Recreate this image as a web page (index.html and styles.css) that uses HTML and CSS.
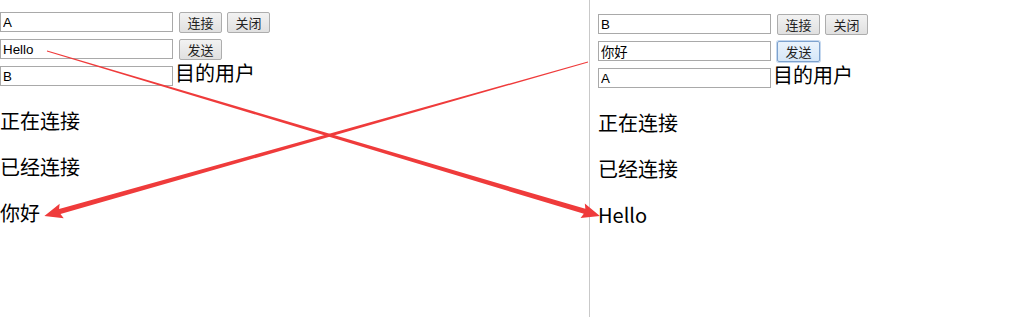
FILE: index.html
```html
<!DOCTYPE html>
<html lang="zh-CN">
<head>
    <meta charset="UTF-8">
    <title>WebSocket 聊天测试</title>
    <link rel="stylesheet" href="styles.css">
</head>
<body>

<div class="screens">
    <!-- 用户 A 的窗口 -->
    <div class="pane pane-left">
        <div class="row">
            <input class="field" type="text" value="A">
            <button class="btn">连接</button>
            <button class="btn">关闭</button>
        </div>
        <div class="row">
            <input class="field" type="text" value="Hello">
            <button class="btn">发送</button>
        </div>
        <div class="row row-target">
            <input class="field" type="text" value="B">
            <span class="label">目的用户</span>
        </div>
        <p class="msg">正在连接</p>
        <p class="msg">已经连接</p>
        <p class="msg">你好</p>
    </div>

    <!-- 用户 B 的窗口 -->
    <div class="pane pane-right">
        <div class="row">
            <input class="field" type="text" value="B">
            <button class="btn">连接</button>
            <button class="btn">关闭</button>
        </div>
        <div class="row">
            <input class="field" type="text" value="你好">
            <button class="btn focused">发送</button>
        </div>
        <div class="row row-target">
            <input class="field" type="text" value="A">
            <span class="label">目的用户</span>
        </div>
        <p class="msg">正在连接</p>
        <p class="msg">已经连接</p>
        <p class="msg">Hello</p>
    </div>
</div>

<!-- 红色箭头：消息的流向 -->
<svg class="arrows" width="1030" height="317" viewBox="0 0 1030 317">
    <g transform="translate(47 51) rotate(16.61)">
        <polygon points="0,-0.4 561,-2.6 559,-7.5 577,0 559,7.5 561,2.6 0,0.4"/>
    </g>
    <g transform="translate(588 62) rotate(164.19)">
        <polygon points="0,-0.4 549,-2.6 547,-7.5 565,0 547,7.5 549,2.6 0,0.4"/>
    </g>
</svg>

</body>
</html>
```

FILE: styles.css
```css
/* Algemene pagina */
body {
    margin: 0;
    background-color: white;
    font-family: "Noto Sans CJK SC", "Noto Sans", sans-serif;
    color: black;
    overflow: hidden;
}

.screens {
    display: flex;
    height: 317px;
}

/* Twee browservensters naast elkaar */
.pane {
    box-sizing: border-box;
}

.pane-left {
    width: 590px;
    padding-top: 12px;
    border-right: 1px solid #c9c9c9;
}

.pane-right {
    flex: 1;
    padding: 14px 0 0 8px;
}

/* Rijen met invoervelden */
.row {
    display: flex;
    align-items: center;
    height: 20px;
    margin-bottom: 7px;
}

.field {
    box-sizing: border-box;
    width: 173px;
    height: 20px;
    margin: 0;
    padding: 1px 2px;
    border: 1px solid #a9a9a9;
    font-family: "Liberation Sans", "Noto Sans CJK SC", sans-serif;
    font-size: 13.33px;
    color: black;
    background-color: white;
}

.btn {
    box-sizing: border-box;
    width: 43px;
    height: 21px;
    margin: 0 0 0 5px;
    padding: 0;
    border: 1px solid #adadad;
    border-radius: 2px;
    background: linear-gradient(#f2f2f2, #e0e0e0);
    font-family: "Noto Sans CJK SC", sans-serif;
    font-size: 13px;
    color: #222;
}

.field + .btn {
    margin-left: 6px;
}

.btn.focused {
    border-color: #7da2ce;
    background: linear-gradient(#eaf3fc, #d6e7f8);
    box-shadow: 0 0 0 1px #c5d8ef;
}

.label {
    font-size: 20px;
    line-height: 20px;
    align-self: flex-start;
    margin: -3px 0 0 2px;
}

/* Berichten */
.msg {
    font-size: 20px;
    line-height: 26px;
    margin: 20px 0;
}

.row-target + .msg {
    margin-top: 22px;
}

/* Pijlen over de inhoud */
.arrows {
    position: absolute;
    top: 0;
    left: 0;
    pointer-events: none;
}

.arrows polygon {
    fill: #ef3b3b;
}
```
